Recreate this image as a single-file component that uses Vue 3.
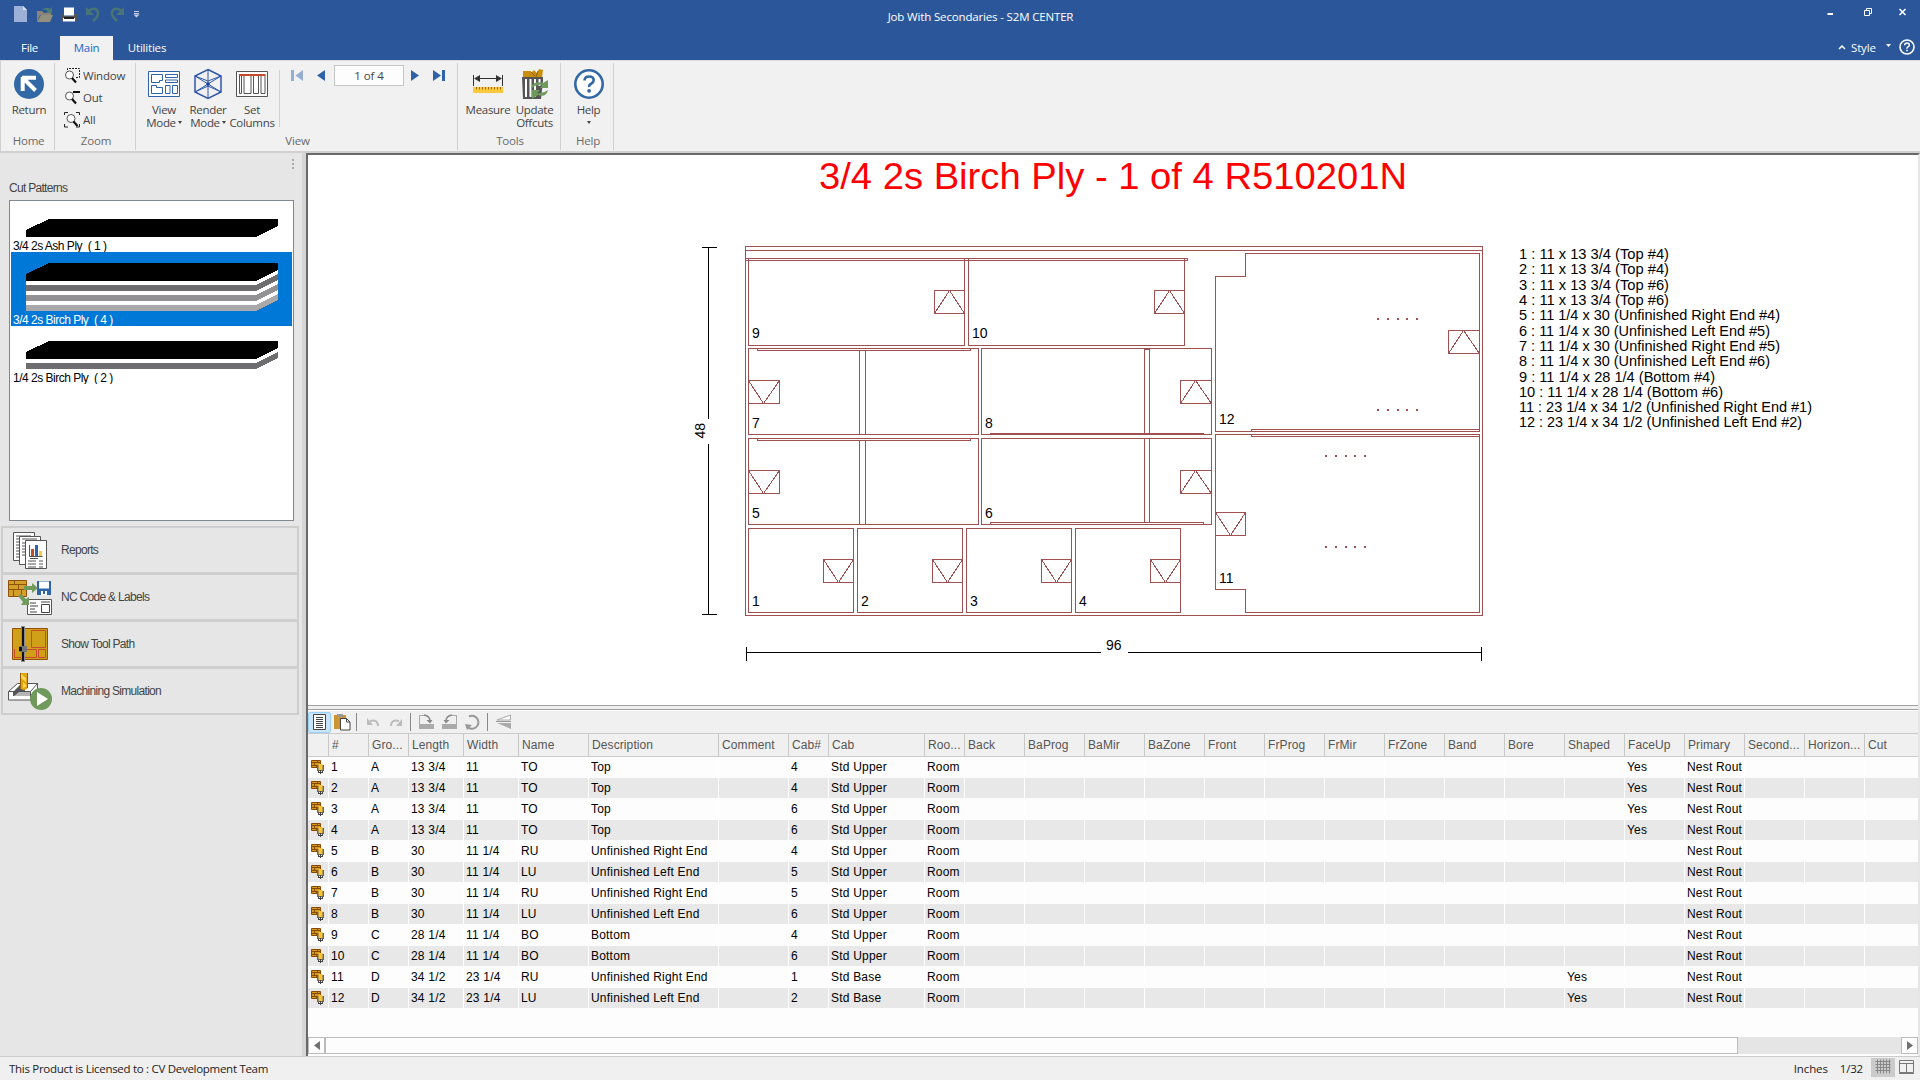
<script setup>
const stacks = [
  { name: '3/4 2s Ash Ply  ( 1 )', height: 50, top: 17, layers: [] },
  { name: '3/4 2s Birch Ply  ( 4 )', height: 74, top: 11, layers: ['#6d6d70', '#929295', '#a9a9ab'], active: true },
  { name: '1/4 2s Birch Ply  ( 2 )', height: 58, top: 15, layers: ['#6d6d70'] }
]
const band = (y, h) => `15,${y} 245,${y} 267,${y - 11} 267,${y - 11 + h} 245,${y + h} 15,${y + h}`

const columns = [
  ['', 21], ['#', 40], ['Gro...', 40], ['Length', 55], ['Width', 55], ['Name', 70], ['Description', 130],
  ['Comment', 70], ['Cab#', 40], ['Cab', 96], ['Roo...', 40], ['Back', 60], ['BaProg', 60], ['BaMir', 60],
  ['BaZone', 60], ['Front', 60], ['FrProg', 60], ['FrMir', 60], ['FrZone', 60], ['Band', 60], ['Bore', 60],
  ['Shaped', 60], ['FaceUp', 60], ['Primary', 60], ['Second...', 60], ['Horizon...', 60], ['Cut', 53]
]
const template = columns.map(c => c[1] + 'px').join(' ')
const parts = [
  ['A', '13 3/4', '11', 'TO', 'Top', '4', 'Std Upper', '', 'Yes'],
  ['A', '13 3/4', '11', 'TO', 'Top', '4', 'Std Upper', '', 'Yes'],
  ['A', '13 3/4', '11', 'TO', 'Top', '6', 'Std Upper', '', 'Yes'],
  ['A', '13 3/4', '11', 'TO', 'Top', '6', 'Std Upper', '', 'Yes'],
  ['B', '30', '11 1/4', 'RU', 'Unfinished Right End', '4', 'Std Upper', '', ''],
  ['B', '30', '11 1/4', 'LU', 'Unfinished Left End', '5', 'Std Upper', '', ''],
  ['B', '30', '11 1/4', 'RU', 'Unfinished Right End', '5', 'Std Upper', '', ''],
  ['B', '30', '11 1/4', 'LU', 'Unfinished Left End', '6', 'Std Upper', '', ''],
  ['C', '28 1/4', '11 1/4', 'BO', 'Bottom', '4', 'Std Upper', '', ''],
  ['C', '28 1/4', '11 1/4', 'BO', 'Bottom', '6', 'Std Upper', '', ''],
  ['D', '34 1/2', '23 1/4', 'RU', 'Unfinished Right End', '1', 'Std Base', 'Yes', ''],
  ['D', '34 1/2', '23 1/4', 'LU', 'Unfinished Left End', '2', 'Std Base', 'Yes', '']
]
const rows = parts.map((p, i) => [
  '', String(i + 1), p[0], p[1], p[2], p[3], p[4], '', p[5], p[6], 'Room',
  '', '', '', '', '', '', '', '', '', '', p[7], p[8], 'Nest Rout', '', '', ''
])

const outlines = [
  'M745 246H1482V615H745Z', 'M745 250H1482', 'M745 258H1187V260H745',
  'M748 258V345H964V258', 'M968 258V345H1184V258',
  'M748 348H978V434H748Z', 'M757 348V350H970V348', 'M859 350V434', 'M865 350V434',
  'M981 348H1211V434H981Z', 'M990 434V433H1203V434', 'M1144 348V433', 'M1149 348V433', 'M1144 349H1149',
  'M748 438H978V524H748Z', 'M757 438V440H970V438', 'M859 440V524', 'M865 440V524',
  'M981 438H1211V524H981Z', 'M990 524V522H1203V524', 'M1144 438V522', 'M1149 438V522',
  'M748 528H853V612H748Z', 'M857 528H962V612H857Z', 'M966 528H1071V612H966Z', 'M1075 528H1180V612H1075Z',
  'M1245 253H1479V431H1215V276H1245Z', 'M1251 431V429H1479',
  'M1215 434H1479V612H1245V589H1215Z', 'M1251 434V436H1479'
]
const tags = [
  [934, 290, 1], [1154, 290, 1], [748, 380, 0, 31], [1180, 380, 1, 31], [748, 470, 0, 31], [1180, 470, 1, 31],
  [823, 559, 0], [932, 559, 0], [1041, 559, 0], [1150, 559, 0], [1448, 330, 1, 31], [1215, 512, 0]
].map(([x, y, up, w = 30]) => {
  const m = x + 15
  return `M${x} ${y}H${x + w}V${y + 23}H${x}Z` + (up
    ? `M${x} ${y + 23}L${m} ${y}L${x + w} ${y + 23}`
    : `M${x} ${y}L${m} ${y + 23}L${x + w} ${y}`)
})
const drills = [[1377, 318], [1377, 409], [1325, 455], [1325, 546]]
const numbers = [
  [752, 606, '1'], [861, 606, '2'], [970, 606, '3'], [1079, 606, '4'], [752, 518, '5'], [985, 518, '6'],
  [752, 428, '7'], [985, 428, '8'], [752, 338, '9'], [972, 338, '10'], [1219, 583, '11'], [1219, 424, '12']
]
const legend = [
  [259, 150, '1 : 11 x 13 3/4 (Top #4)'], [274, 150, '2 : 11 x 13 3/4 (Top #4)'],
  [290, 150, '3 : 11 x 13 3/4 (Top #6)'], [305, 150, '4 : 11 x 13 3/4 (Top #6)'],
  [320, 261, '5 : 11 1/4 x 30 (Unfinished Right End #4)'], [336, 251, '6 : 11 1/4 x 30 (Unfinished Left End #5)'],
  [351, 261, '7 : 11 1/4 x 30 (Unfinished Right End #5)'], [366, 251, '8 : 11 1/4 x 30 (Unfinished Left End #6)'],
  [382, 196, '9 : 11 1/4 x 28 1/4 (Bottom #4)'], [397, 204, '10 : 11 1/4 x 28 1/4 (Bottom #6)'],
  [412, 293, '11 : 23 1/4 x 34 1/2 (Unfinished Right End #1)'], [427, 283, '12 : 23 1/4 x 34 1/2 (Unfinished Left End #2)']
]
</script>

<template>
  <div class="app">
    <header class="title">
      <svg class="quick" width="150" height="36" viewBox="0 0 150 36">
        <path d="M14 6h9l4 4v12H14z" fill="#9db1d8" /><path d="M23 6v4h4z" fill="#dfe6f3" />
        <path d="M37 11h5l2 2h7v2H40l-3 7z" fill="#8a8576" /><path d="M41 15h12l-3 7H37z" fill="#94907f" />
        <path d="M42 10q4-4 8-1l2-2v6h-6l2-2q-3-2-6-1z" fill="#4d7c73" />
        <path d="M61 14h3v2h10v-2h3v7H61z" fill="#555" /><path d="M64 7.500h10v8H64z" fill="#fff" /><path d="M63 18h12v3.500H63z" fill="#fff" /><path d="M64 17h10v2H64z" fill="#222" />
        <path d="M88 11q8-5 10 1q1 4-5 9" fill="none" stroke="#4a7576" stroke-width="2.400" /><path d="M86 7v8h8z" fill="#4a7576" />
        <path d="M122 11q-8-5-10 1q-1 4 5 9" fill="none" stroke="#4a7576" stroke-width="2.400" /><path d="M124 7v8h-8z" fill="#4a7576" />
        <path d="M134 11.500h5M134 13.500h5" stroke="#c3cee2" /><path d="M133.500 14.500h6l-3 3z" fill="#c3cee2" />
      </svg>
      <span class="caption">Job With Secondaries - S2M CENTER</span>
      <svg class="winbtns" width="110" height="36" viewBox="0 0 110 36" fill="none" stroke="#fff">
        <path d="M17.500 14h5.500" stroke-width="2" /><path d="M54.500 10.500h5v5h-5zM56.500 10v-1.500h5v5h-2" /><path d="M89.500 9l6 6M95.500 9l-6 6" stroke-width="1.500" />
      </svg>
    </header>
    <nav class="tabs">
      <span class="tab file">File</span><span class="tab on">Main</span><span class="tab util">Utilities</span>
      <span class="style">
        <svg width="8" height="6" viewBox="0 0 8 6"><path d="M1 5l3-3 3 3" fill="none" stroke="#fff" stroke-width="1.500" /></svg>
        <span>Style</span>
        <svg class="dd" width="7" height="4" viewBox="0 0 7 4"><path d="M1 0h5L3.500 3z" fill="#fff" /></svg>
        <svg width="18" height="18" viewBox="0 0 18 18"><circle cx="9" cy="9" r="7" fill="none" stroke="#fff" stroke-width="1.600" /><path d="M6.600 7.300q.2-2.300 2.400-2.300t2.300 2q0 1.100-1.300 1.800t-1 1.900" fill="none" stroke="#fff" stroke-width="1.500" /><path d="M8.200 11.800h1.600v1.500H8.200z" fill="#fff" /></svg>
      </span>
    </nav>

    <section class="ribbon">
      <div class="group home">
        <div class="tools">
          <div class="big">
            <svg width="32" height="32" viewBox="0 0 32 32"><circle cx="16" cy="16" r="15" fill="#3268a6" /><path d="M9 9.700h14M9.700 9v14M10.500 10.500l12 12" stroke="#fff" stroke-width="4" fill="none" /></svg>
            <span>Return</span>
          </div>
        </div>
        <div class="label">Home</div>
      </div>
      <div class="group zoom">
        <div class="small">
          <div>
            <svg width="17" height="17" viewBox="0 0 17 17"><path d="M3.500 6V1.500h12v9H11" fill="none" stroke="#222" stroke-dasharray="2 1" /><circle cx="5.500" cy="8" r="4" fill="#fff" stroke="#555" /><path d="M8 11l4 4.500" stroke="#111" stroke-width="2.200" /></svg>
            <span>Window</span>
          </div>
          <div>
            <svg width="17" height="17" viewBox="0 0 17 17"><path d="M9 3h7" stroke="#111" stroke-width="2" /><circle cx="5.500" cy="7" r="4" fill="#fff" stroke="#555" /><path d="M8 10l4 4.500" stroke="#111" stroke-width="2.200" /></svg>
            <span>Out</span>
          </div>
          <div>
            <svg width="17" height="17" viewBox="0 0 17 17"><path d="M.5 4V1.500H4M12 1.500h3.500V4M15.500 13v3H12M4 16H.5v-3" fill="none" stroke="#222" /><circle cx="7" cy="7.500" r="4" fill="#fff" stroke="#555" /><path d="M9.500 10.500l4 4.500" stroke="#111" stroke-width="2.200" /></svg>
            <span>All</span>
          </div>
        </div>
        <div class="label">Zoom</div>
      </div>
      <div class="group view">
        <div class="tools">
          <div class="big vm">
            <svg width="32" height="32" viewBox="0 0 32 32" fill="none" stroke="#2f62a8"><path d="M.5 3.500h31v25H.5z" fill="#fff" /><path d="M3.500 6.500h11v6h-3v2h-8zM17.500 6.500h12v3h-12zM17.500 12h12v2.500h-12zM3.500 17.500h5v2h6v6h-11zM17.500 17.500h4.500v8h-4.500zM24.500 17.500h5v8h-5z" /></svg>
            <span>View</span><span>Mode<i></i></span>
          </div>
          <div class="big rm">
            <svg width="32" height="32" viewBox="0 0 32 32" fill="none" stroke="#2f57a8" stroke-width="1.500"><path d="M16 1.500l13 6.500v16l-13 6.500L3 24V8z" /><path d="M16 1.500v29M3 8l26 16M29 8L3 24M3 8l13 5 13-5M3 24l13-6 13 6" stroke-width="1" /><circle cx="16" cy="16" r="1.800" fill="#1a3f9c" stroke="none" /></svg>
            <span>Render</span><span>Mode<i></i></span>
          </div>
          <div class="big sc">
            <svg width="32" height="32" viewBox="0 0 32 32" fill="none" stroke="#555"><path d="M.5 3.500h31v25H.5z" fill="#fff" /><path d="M3.500 7.500h2v18h-2zM8 7.500h7v18H8zM17.500 7.500h5v18h-5zM25 7.500h4v18h-4z" /><path d="M3 7h26.500" stroke="#c8492c" stroke-width="2" /></svg>
            <span>Set</span><span>Columns</span>
          </div>
          <div class="pager">
            <svg width="42" height="12" viewBox="0 0 42 12"><path d="M0 0h3v11H0zM12 0v11L4.500 5.500z" fill="#94add0" /><path d="M34 0v11L26 5.500z" fill="#2e64a7" /></svg>
            <div class="page">1 of 4</div>
            <svg width="34" height="12" viewBox="0 0 34 12" fill="#2e64a7"><path d="M0 0v11l8-5.500zM22 0v11l8-5.500zM31 0h3v11h-3z" /></svg>
          </div>
        </div>
        <div class="label">View</div>
      </div>
      <div class="group toolset">
        <div class="tools">
          <div class="big ms">
            <svg width="32" height="32" viewBox="0 0 32 32"><path d="M1.500 7v11M30.500 7v11M3 10.500h26" stroke="#333" /><path d="M2 10.500l6-3.500v7zM30 10.500l-6-3.500v7z" fill="#333" /><path d="M1 19h30v6H1z" fill="#fdc93c" /><path d="M4.500 19v2.500M7.500 19v2.500M10.500 19v2.500M13.500 19v2.500M16.500 19v2.500M19.500 19v2.500M22.500 19v2.500M25.500 19v2.500M28.500 19v2.500" stroke="#a06c10" /></svg>
            <span>Measure</span>
          </div>
          <div class="big up">
            <svg width="32" height="32" viewBox="0 0 32 32"><path d="M4 3l8 0v2l3-3 3 3 2-4 4 1-1 8H4z" fill="#c98f0c" /><path d="M12 4l4 4M19 3l-2 6" stroke="#925f05" /><path d="M3 9h21v4l-2 18H4z" fill="#555" /><path d="M6 11h2v18H6zM10.500 11h2v18h-2zM15 11h2v18h-2zM19.500 11h2v7h-2z" fill="#fff" /><path d="M12 21q1-9 12-6l5-3v8h-8l3-3q-7-1-12 4zM29 22q-2 8-10 5l-6 4v-9h8l-3 3q6 1 11-3z" fill="#6f9a5c" /></svg>
            <span>Update</span><span>Offcuts</span>
          </div>
        </div>
        <div class="label">Tools</div>
      </div>
      <div class="group help">
        <div class="tools">
          <div class="big">
            <svg width="32" height="32" viewBox="0 0 32 32"><circle cx="16" cy="16" r="13.700" fill="#fff" stroke="#3268a6" stroke-width="2.600" /><path d="M11.500 12.500q.2-4 4.600-4t4.600 3.600q0 2.200-2.400 3.600t-2.200 3.300" fill="none" stroke="#3268a6" stroke-width="2.600" /><circle cx="16.100" cy="22.800" r="1.900" fill="#3268a6" /></svg>
            <span>Help</span><span><i class="solo"></i></span>
          </div>
        </div>
        <div class="label">Help</div>
      </div>
    </section>

    <main class="work">
      <aside class="side">
        <div class="grip"><b></b><b></b><b></b></div>
        <div class="heading">Cut Patterns</div>
        <div class="list">
          <div v-for="s in stacks" :key="s.name" class="stack" :class="{ active: s.active }" :style="{ height: s.height + 'px' }">
            <svg width="280" :height="s.height - 14" :viewBox="`0 0 280 ${s.height - 14}`" shape-rendering="crispEdges">
              <g :transform="`translate(0 ${s.top})`">
                <template v-for="(c, i) in s.layers" :key="i">
                  <polygon :points="band(18 + i * 10, 4)" fill="#fff" />
                  <polygon :points="band(22 + i * 10, 6)" :fill="c" />
                </template>
                <polygon points="15,11 38,0 267,0 267,7 245,18 15,18" fill="#000" />
              </g>
            </svg>
            <div class="name">{{ s.name }}</div>
          </div>
        </div>
        <div class="actions">
          <div class="action">
            <svg width="50" height="44" viewBox="0 0 50 44" fill="#fff" stroke="#555"><path d="M10.500 4.500h21v28h-21z" /><path d="M13 8h15M13 11h3M13 14h3M13 17h3M13 20h3M13 23h3M13 26h3M13 29h3" /><path d="M16.500 8.500h21v28h-21z" /><path d="M19 11h15M19 15h4M19 18h4M19 21h4M19 24h4M19 27h4" /><path d="M22.500 12.500h21v28h-21z" /><path d="M26.500 17v11.500h13M25 33h8M25 36h8M25 39h8M36 33h4M36 36h4M36 39h4M27 30.500h8" /><path d="M28 21h3v7h-3z" fill="#c8492c" stroke="none" /><path d="M32 17h3v11h-3z" fill="#2e64a7" stroke="none" /><path d="M36 23h3v5h-3z" fill="#fdc93c" stroke="none" /></svg>
            <span>Reports</span>
          </div>
          <div class="action">
            <svg width="50" height="44" viewBox="0 0 50 44"><path d="M5.500 5.500h18v16h-18z" fill="#d3a02a" stroke="#925108" /><path d="M5 9.500h19M5 14.500h19M11.500 5v4.500M15.500 9.500v5M10.500 14.500v7M18.500 14.500v7" stroke="#925108" /><path d="M34 6h14v14H34z" fill="#2e64a7" /><path d="M36 6.500h10v7H36zM38 16h6v4h-6z" fill="#fff" /><path d="M40 16h2v3h-2z" fill="#2e64a7" /><path d="M24.500 24.500h24v15h-24z" fill="#fff" stroke="#555" /><path d="M27 28h6M27 31h8M27 34h5M27 37h7M38.500 29.500h8v8h-8zM38 27h9" stroke="#444" fill="none" /><path d="M21 11h8V8l6 5-6 5v-3h-8zM15 21l3-2 5 5 3-2v8h-8l2-3z" fill="#6f9a5c" /></svg>
            <span>NC Code &amp; Labels</span>
          </div>
          <div class="action">
            <svg width="50" height="44" viewBox="0 0 50 44"><path d="M9.500 6.500h35v31h-35z" fill="#d0a118" stroke="#925108" /><path d="M28.500 8.500h14v17h-14zM11.500 27v8.500h22v-8h-13M35.500 27.500h7v8h-7z" fill="none" stroke="#c8492c" /><path d="M18 4h4v36h-4z" fill="#8b8b8b" /><path d="M19 5h2v34h-2z" fill="#111" /><path d="M16 24h8v6h-8z" fill="#777" /><path d="M16 25h3v4h-3z" fill="#111" /></svg>
            <span>Show Tool Path</span>
          </div>
          <div class="action">
            <svg width="50" height="44" viewBox="0 0 50 44"><path d="M5.500 22.500l9-8h20v9.500l-7 7h-22z" fill="#fff" stroke="#555" /><path d="M6 22.500h21.500v8.500M27.500 22.500l7-8" fill="none" stroke="#555" /><path d="M10 27v-4l7-7h5v6l-5 5z" fill="#555" /><path d="M11 27l5-4h11v4z" fill="#b5b5b5" /><path d="M17 4h8v15q-4 4-8 0z" fill="#e2a50a" /><path d="M18 5l5 4v4l-5-4zM20 13l4 4-4 2z" fill="#ffd75c" /><path d="M17.500 4v15M24.500 4v15" stroke="#8c5a08" /><circle cx="38" cy="30" r="11" fill="#6f9a5c" /><path d="M34 23l11 7-11 7z" fill="#fff" /></svg>
            <span>Machining Simulation</span>
          </div>
        </div>
      </aside>
      <div class="splitter"></div>

      <div class="doc">
        <svg class="sheet" width="1610" height="550" viewBox="308 155 1610 550">
          <text x="819" y="189" font-size="37" fill="#ff0000" textLength="588" lengthAdjust="spacingAndGlyphs">3/4 2s Birch Ply - 1 of 4 R510201N</text>
          <g transform="translate(.5 .5)" fill="none" stroke="#a05050" shape-rendering="crispEdges">
            <path v-for="(d, i) in outlines" :key="i" :d="d" />
            <path v-for="(d, i) in tags" :key="'t' + i" :d="d" />
          </g>
          <g fill="#a05050" shape-rendering="crispEdges">
            <template v-for="(d, i) in drills" :key="i">
              <rect v-for="n in 5" :key="n" :x="d[0] + Math.round((n - 1) * 9.75)" :y="d[1]" width="2" height="2" />
            </template>
          </g>
          <g transform="translate(.5 .5)" fill="none" stroke="#000" shape-rendering="crispEdges">
            <path d="M701 247H716M708 247V418M708 443V614M701 614H716M746 646V660M746 652H1100M1127 652H1481M1481 646V660" />
          </g>
          <g font-size="14">
            <text v-for="n in numbers" :key="n[2]" :x="n[0]" :y="n[1]">{{ n[2] }}</text>
            <text x="1106" y="650">96</text>
            <text transform="translate(705 438.500) rotate(-90)">48</text>
          </g>
          <g font-size="14.500">
            <text v-for="l in legend" :key="l[2]" x="1519" :y="l[0]" :textLength="l[1]" lengthAdjust="spacingAndGlyphs">{{ l[2] }}</text>
          </g>
        </svg>
        <div class="split"></div>
        <div class="gridbar">
          <div class="toggle"><svg width="14" height="18" viewBox="0 0 14 18" fill="#fff" stroke="#444"><path d="M.5 1.500h12v15H.5z" /><path d="M3 4.500h7M3 6.500h7M3 8.500h7M3 10.500h7M3 12.500h7M3 14.500h7" /></svg></div>
          <svg class="cmds" width="184" height="20" viewBox="332 712 184 20">
            <path d="M334 715h12v14h-12z" fill="#cc9433" /><path d="M337 714h6v3h-6z" fill="#999" /><path d="M340.500 718.500h6l3.500 3.500v8h-9.500z" fill="#fff" stroke="#444" /><path d="M346.500 718.500v3.500h3.500" fill="none" stroke="#444" />
            <path d="M356.500 713v18M410.500 713v18M487.500 713v18" stroke="#888" />
            <path d="M370 721q8-2 8 5" fill="none" stroke="#bbb" stroke-width="2" /><path d="M367 718v7h6z" fill="#bbb" />
            <path d="M399 721q-8-2-8 5" fill="none" stroke="#bbb" stroke-width="2" /><path d="M402 719v7h-6z" fill="#bbb" />
            <path d="M419.500 715v14M419.500 715.500h5" stroke="#aaa" /><path d="M420 724h14v5h-14z" fill="#aaa" /><path d="M424 715q6 1 6 6" fill="none" stroke="#888" stroke-width="1.500" /><path d="M426.500 720h6l-2.500 3.500z" fill="#888" />
            <path d="M456.500 715v14M456.500 715.500h-5" stroke="#aaa" /><path d="M442 724h14v5h-14z" fill="#aaa" /><path d="M452 715q-6 1-6 6" fill="none" stroke="#888" stroke-width="1.500" /><path d="M449.500 720h-6l2.500 3.500z" fill="#888" />
            <path d="M469 716.500a6.500 6.500 0 1 1-2 10" fill="none" stroke="#999" stroke-width="2" /><path d="M465 724l7 1-5 5z" fill="#999" />
            <path d="M510.500 715v5H497z" fill="#fff" stroke="#aaa" /><path d="M496 721h15v1h-15z" fill="#999" /><path d="M497 723h14v6z" fill="#aaa" />
          </svg>
        </div>
        <div class="row head" :style="{ gridTemplateColumns: template }">
          <div v-for="(c, i) in columns" :key="i">{{ c[0] }}</div>
        </div>
        <div class="rows">
          <div v-for="(r, i) in rows" :key="i" class="row" :style="{ gridTemplateColumns: template }">
            <div v-for="(v, j) in r" :key="j">
              <svg v-if="j === 0" width="18" height="20" viewBox="0 0 18 20"><path d="M1.500 3.500h9v7h-9z" fill="#d49a1a" stroke="#8a4a05" /><path d="M1 5.500h10M1 8.500h10M4.500 6v2.500M7.500 3.500V6M6.500 8v3" stroke="#8a4a05" /><path d="M7 8h7v6H7z" fill="#666" /><path d="M8.500 7h4v6h-4z" fill="#fdc52f" /><path d="M10.500 13v4M8 15.500h5M8.500 14v2M12.500 14v2" stroke="#444" /></svg>
              <template v-else>{{ v }}</template>
            </div>
          </div>
        </div>
        <div class="hscroll">
          <div class="arrow"><svg width="6" height="10" viewBox="0 0 6 10"><path d="M6 0v9L0 4.500z" fill="#707070" /></svg></div>
          <div class="thumb"></div>
          <div class="track"></div>
          <div class="arrow"><svg width="6" height="10" viewBox="0 0 6 10"><path d="M0 0v9l6-4.500z" fill="#707070" /></svg></div>
        </div>
      </div>
    </main>

    <footer class="status">
      <span class="lic">This Product is Licensed to : CV Development Team</span>
      <span class="units">Inches</span><span class="frac">1/32</span>
      <div class="gridbtn"><svg width="16" height="16" viewBox="0 0 16 16"><path d="M.5 2.500h15M.5 5.500h15M.5 8.500h15M.5 11.500h15M2.500 .5v14M5.500 .5v14M8.500 .5v14M11.500 .5v14M14.500 .5v14" stroke="#888" /></svg></div>
      <svg class="panes" width="16" height="16" viewBox="0 0 16 16" fill="none" stroke="#777"><path d="M.5 1.500h14v12H.5zM.5 4.500h14M7.500 4v9" /><path d="M0 14.500h15" /></svg>
    </footer>
  </div>
</template>

<style>
html, body { margin: 0; background: #f0f0f0; overflow: hidden; }
</style>
<style scoped>
.app { width: 1920px; height: 1080px; display: flex; flex-direction: column; overflow: hidden; font: 11.5px/13px "Open Sans", "Noto Sans", sans-serif; letter-spacing: -.3px; color: #444; white-space: pre; }
svg { display: block; flex: none; }
.title { height: 36px; background: #2b579a; display: flex; }
.caption { color: #fff; line-height: 34px; flex: 1; padding-right: 0; padding-left: 1px; text-align: center; letter-spacing: -.16px; margin-right: -40px; }
.winbtns { margin-left: 40px; }
.tabs { height: 24px; background: #2b579a; display: flex; color: #fff; line-height: 23px; }
.tab { width: 60px; text-align: center; box-sizing: border-box; padding-right: 1px; }
.tab.on { width: 53px; height: 25px; background: #f1f1f1; color: #1b66c9; z-index: 1; padding-right: 0; }
.tab.util { width: 69px; letter-spacing: -.2px; }
.style { margin-left: auto; display: flex; align-items: center; width: 82px; gap: 5px; height: 22px; letter-spacing: -.15px; }
.style .dd { margin: -3px 1px 0 4px; }
.ribbon { height: 93px; background: #f1f1f1; border-top: 1px solid #dcdcdc; border-bottom: 2px solid #d0d0d0; border-left: 1px solid #d0d0d0; box-sizing: border-box; display: flex; }
.group { display: flex; flex-direction: column; box-sizing: border-box; background: linear-gradient(#d0d0d0, #d0d0d0) right 2px / 1px 87px no-repeat; }
.home { width: 54px; } .zoom { width: 81px; } .view { width: 322px; } .toolset { width: 103px; } .help { width: 53px; }
.label { color: #6a6a6a; text-align: center; height: 15px; line-height: 15px; padding-left: 1px; letter-spacing: -.2px; }
.tools { height: 72px; display: flex; }
.big { display: flex; flex-direction: column; align-items: center; padding: 7px 0 0 1px; width: 100%; flex: none; box-sizing: border-box; }
.home .big { padding-left: 2px; }
.help .big { padding-left: 2px; }
.big svg { margin-bottom: 3px; }
.big i { display: inline-block; border: 2.5px solid transparent; border-top: 3px solid #444; border-bottom: 0; margin: 0 0 3px 2px; }
.big i.solo { margin-left: 0; }
.vm { width: 55px; } .rm { width: 33px; } .sc { width: 55px; }
.view .tools { background: linear-gradient(#d0d0d0, #d0d0d0) 143px 9px / 1px 57px no-repeat; }
.pager { display: flex; align-items: center; height: 21px; margin: 4px 0 0 12px; }
.page { width: 68px; height: 19px; border: 1px solid #c6c6c6; background: #fdfdfd; margin: 0 7px 0 1px; text-align: center; line-height: 20px; letter-spacing: -.1px; }
.toolset .ms { width: 60px; padding-left: 0; } .toolset .up { width: 32px; }
.small { height: 72px; padding: 3px 0 0 9px; box-sizing: border-box; letter-spacing: -.2px; }
.small div { display: flex; align-items: center; gap: 2px; height: 22px; }
.work { flex: 1; display: flex; min-height: 0; }
.side { width: 302px; background: #e6e6e6; box-sizing: border-box; }
.grip { height: 24px; padding: 6px 0 0 292px; box-sizing: border-box; display: flex; flex-direction: column; gap: 2px; }
.grip b { width: 2px; height: 2px; background: #aaa; }
.heading { padding-left: 9px; height: 23px; font: 12px/23px "Liberation Sans", sans-serif; letter-spacing: -.7px; }
.list { margin-left: 9px; width: 285px; height: 321px; border: 1px solid #828790; background: #fff; padding: 1px; box-sizing: border-box; }
.stack { width: 281px; color: #000; overflow: hidden; }
.stack.active { background: #0078d7; color: #fff; }
.name { font: 12px/17px "Liberation Sans", sans-serif; letter-spacing: -.5px; padding-left: 2px; height: 14px; }
.actions { margin: 5px 0 0 1px; width: 298px; background: #cecece; padding: 2px; box-sizing: border-box; display: flex; flex-direction: column; gap: 3px; }
.action { height: 44px; background: #e6e6e6; display: flex; align-items: center; font: 12px/14px "Liberation Sans", sans-serif; letter-spacing: -.7px; }
.action span { margin-left: 8px; }
.splitter { width: 4px; background: #d6d6d6; }
.doc { width: 1614px; box-sizing: border-box; border-left: 2px solid #696969; border-top: 2px solid #696969; border-right: 2px solid #e6e6e6; background: #fdfdfd; display: flex; flex-direction: column; overflow: hidden; }
.sheet { background: #fff; font-family: "Liberation Sans", Arial, sans-serif; letter-spacing: 0; }
.split { height: 3px; border: 1px solid #a0a0a0; border-width: 1px 0; background: #f0f0f0; }
.gridbar { height: 23px; background: #f0f0f0; border-top: 1px solid #fff; box-sizing: border-box; display: flex; align-items: center; }
.toggle { width: 23px; height: 21px; box-sizing: border-box; border: 1px solid #99d1ff; background: #cce4f7; display: flex; align-items: center; justify-content: center; margin-right: 1px; border-radius: 2px; padding-left: 1px; }
.row { display: grid; height: 21px; font: 12px/21px "Liberation Sans", Arial, sans-serif; letter-spacing: .2px; color: #000; }
.row div { padding-left: 2px; height: 20px; box-sizing: border-box; border-right: 1px solid #fff; overflow: hidden; }
.rows .row:nth-child(even) div { background: #e8e8e8; }
.row.head { height: 24px; border-top: 1px solid #cbcbcb; border-bottom: 1px solid #cbcbcb; box-sizing: border-box; color: #555; background: #f0f0f0; letter-spacing: .1px; line-height: 23px; }
.row.head div { height: 22px; border-right: 1px solid #c8c8c8; padding-left: 3px; }
.row div:last-child, .row.head div:last-child { border-right: 0; }
.rows { height: 280px; }
.hscroll { height: 17px; display: flex; background: #e5e5e5; width: 1610px; }
.arrow { width: 17px; height: 17px; border: 1px solid #bbb; box-sizing: border-box; background: #fdfdfd; display: flex; align-items: center; justify-content: center; }
.thumb { width: 1413px; border: 1px solid #bbb; box-sizing: border-box; background: #fdfdfd; }
.track { flex: 1; }
.status { height: 24px; background: #f0f0f0; border-top: 1px solid #cbcbcb; box-sizing: border-box; display: flex; align-items: center; color: #222; padding-bottom: 1px; }
.lic { margin-left: 9px; letter-spacing: -.29px; }
.units { margin-left: auto; letter-spacing: -.1px; } .frac { margin-left: 12px; letter-spacing: -.2px; }
.gridbtn { width: 24px; height: 19px; background: #cbcbcb; margin: 0 4px 2px 8px; display: flex; justify-content: center; align-items: center; }
.panes { margin: 0 5px 2px 0; }
</style>
